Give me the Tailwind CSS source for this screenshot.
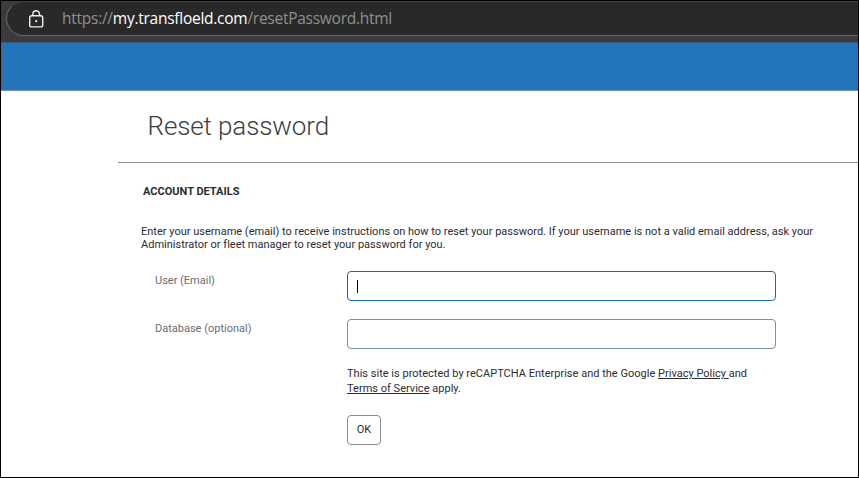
<!DOCTYPE html>
<html lang="en">
<head>
    <meta charset="UTF-8">
    <meta name="viewport" content="width=device-width, initial-scale=1.0">
    <title>Reset password</title>
    <script src="https://cdn.jsdelivr.net/npm/@tailwindcss/browser@4"></script>
</head>
<body class="h-screen overflow-hidden border border-black bg-white font-[Roboto,sans-serif] text-[11px] text-[#2b2d30]">
    <!-- Address Bar -->
    <div class="h-[41px] bg-[#3b3b3b] pl-[5px]">
        <div class="flex h-[35px] items-center rounded-l-[18px] border border-r-0 border-t-[#3f4142] border-b-[#5c6a73] border-l-[#5c6a73] bg-[#292929] pl-[20px]">
            <svg class="mr-[17px] h-[20px] w-[18px] shrink-0" viewBox="0 0 18 20" fill="none" stroke="#f0f0f0" stroke-width="1.4">
                <rect x="2.7" y="6.7" width="13" height="11.2" rx="2" />
                <path d="M5.9 6.7V5.1a3.3 3.3 0 0 1 6.6 0v1.6" />
                <circle cx="9.2" cy="12.2" r="1.1" fill="#f0f0f0" stroke="none" />
            </svg>
            <span class="pb-[2px] font-['Open_Sans',sans-serif] text-[15.5px] leading-5 tracking-[-0.26px] whitespace-nowrap text-[#8f8f8f]">https://<span class="text-white">my.transfloeld.com</span>/resetPassword.html</span>
        </div>
    </div>

    <!-- Header -->
    <div class="h-[49px] border-t border-b border-t-[#2d608f] border-b-[#8292a6] bg-[#2474bb]"></div>

    <div class="pl-[117px]">
        <h1 class="h-[72px] border-b border-[#8c8f91] pt-[19px] pl-[29.5px] text-[26px] leading-8 font-light tracking-[-0.12px] text-[#3c3e40]">Reset password</h1>

        <div class="pt-[21px] pl-[23px]">
            <h2 class="pl-[2px] text-[11px] leading-4 font-bold">ACCOUNT DETAILS</h2>
            <p class="mt-[25px] w-[690px] leading-[13px] tracking-[0.008px]">Enter your username (email) to receive instructions on how to reset your password. If your username is not a valid email address, ask your<br>Administrator or fleet manager to reset your password for you.</p>

            <!-- Reset Form -->
            <form class="mt-[20px] grid w-[636px] grid-cols-[192px_1fr] gap-y-[18px] pl-[14px]">
                <label for="email" class="pt-[2px] leading-4 text-[#6b6e72]">User (Email)</label>
                <div class="flex h-[30px] w-[429px] items-center rounded-[4px] border border-[#1a6aa8] pl-[9px]">
                    <span id="email" class="h-[13px] w-px bg-black"></span>
                </div>
                <label for="database" class="pt-[2px] leading-4 text-[#6b6e72]">Database (optional)</label>
                <input id="database" type="text" class="h-[30px] w-[429px] rounded-[4px] border border-[#7d8fa3] px-2">

                <p class="col-start-2 -mt-[1px] mb-px leading-[15px] tracking-[0.015px] whitespace-nowrap">This site is protected by reCAPTCHA Enterprise and the Google <a href="#" class="underline">Privacy Policy </a>and<br><a href="#" class="underline">Terms of Service</a> apply.</p>
                <button type="button" class="col-start-2 h-[30px] w-[34px] rounded-[4px] border border-[#8c8f91]">OK</button>
            </form>
        </div>
    </div>
</body>
</html>
